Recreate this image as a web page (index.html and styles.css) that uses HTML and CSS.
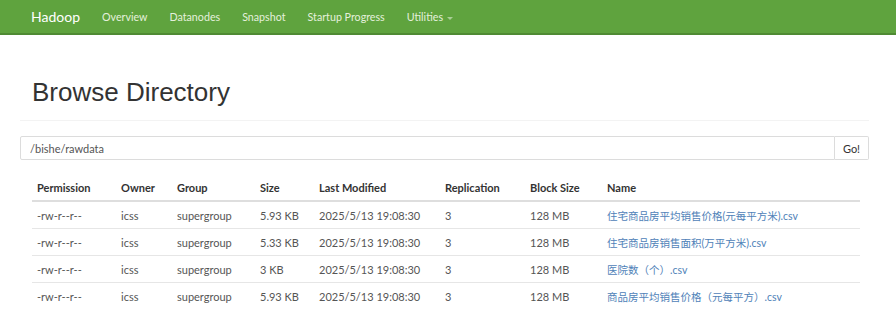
FILE: index.html
```html
<!DOCTYPE html>
<html lang="en">
<head>
    <meta charset="UTF-8">
    <title>Browsing HDFS</title>
    <link rel="stylesheet" href="styles.css">
</head>
<body>
    <nav class="navbar">
        <span class="brand">Hadoop</span>
        <a href="#">Overview</a>
        <a href="#">Datanodes</a>
        <a href="#">Snapshot</a>
        <a href="#">Startup Progress</a>
        <a href="#" class="dropdown">Utilities <span class="caret"></span></a>
    </nav>

    <div class="container">
        <div class="page-header">
            <h1>Browse Directory</h1>
        </div>

        <div class="input-group">
            <input type="text" class="path" value="/bishe/rawdata">
            <button class="go">Go!</button>
        </div>

        <table class="listing">
            <thead>
                <tr>
                    <th class="c-perm">Permission</th>
                    <th class="c-owner">Owner</th>
                    <th class="c-group">Group</th>
                    <th class="c-size">Size</th>
                    <th class="c-mod">Last Modified</th>
                    <th class="c-rep">Replication</th>
                    <th class="c-block">Block Size</th>
                    <th class="c-name">Name</th>
                </tr>
            </thead>
            <tbody>
                <tr>
                    <td>-rw-r--r--</td><td>icss</td><td>supergroup</td><td>5.93 KB</td>
                    <td>2025/5/13 19:08:30</td><td>3</td><td>128 MB</td>
                    <td><a href="#">住宅商品房平均销售价格(元每平方米).csv</a></td>
                </tr>
                <tr>
                    <td>-rw-r--r--</td><td>icss</td><td>supergroup</td><td>5.33 KB</td>
                    <td>2025/5/13 19:08:30</td><td>3</td><td>128 MB</td>
                    <td><a href="#">住宅商品房销售面积(万平方米).csv</a></td>
                </tr>
                <tr>
                    <td>-rw-r--r--</td><td>icss</td><td>supergroup</td><td>3 KB</td>
                    <td>2025/5/13 19:08:30</td><td>3</td><td>128 MB</td>
                    <td><a href="#">医院数（个）.csv</a></td>
                </tr>
                <tr>
                    <td>-rw-r--r--</td><td>icss</td><td>supergroup</td><td>5.93 KB</td>
                    <td>2025/5/13 19:08:30</td><td>3</td><td>128 MB</td>
                    <td><a href="#">商品房平均销售价格（元每平方）.csv</a></td>
                </tr>
            </tbody>
        </table>
    </div>
</body>
</html>
```

FILE: styles.css
```css
body {
    margin: 0;
    font-family: Lato, "Noto Sans CJK SC", sans-serif;
    color: #333;
    background: #fff;
}
.navbar {
    display: flex;
    align-items: center;
    height: 33px;
    padding-left: 31px;
    background: #5fa33e;
    border-bottom: 2px solid #4f8a33;
}
.navbar a {
    color: #e4f0dc;
    text-decoration: none;
    font-size: 10.7px;
    margin-left: 22px;
}
.brand {
    color: #fff;
    font-size: 14px;
}
.caret {
    display: inline-block;
    width: 0;
    height: 0;
    margin-left: 1px;
    vertical-align: middle;
    border-top: 3px solid #a9cf96;
    border-left: 3px solid transparent;
    border-right: 3px solid transparent;
}
.container {
    padding: 0 27px 0 20px;
}
.page-header {
    margin: 0 0 15px 0;
    padding: 40px 0 11px 12px;
    border-bottom: 1px solid #f3f3f3;
}
.page-header h1 {
    margin: 0;
    font-family: "Liberation Sans", Arial, sans-serif;
    font-weight: normal;
    font-size: 26px;
    line-height: 34px;
    color: #333;
}
.input-group {
    display: flex;
    height: 24px;
}
.path {
    flex: 1;
    box-sizing: border-box;
    height: 24px;
    margin: 0;
    padding: 0 9px;
    border: 1px solid #dcdcdc;
    border-radius: 2px 0 0 2px;
    font-family: Lato, sans-serif;
    font-size: 11px;
    color: #555;
}
.go {
    box-sizing: border-box;
    width: 34px;
    height: 24px;
    margin: 0;
    padding: 0;
    border: 1px solid #dcdcdc;
    border-left: none;
    border-radius: 0 2px 2px 0;
    background: #fff;
    font-family: Lato, sans-serif;
    font-size: 11px;
    color: #333;
}
.listing {
    margin: 14px 0 0 12px;
    border-collapse: collapse;
    font-size: 11px;
}
.listing th {
    text-align: left;
    font-weight: bold;
    color: #333;
    height: 26px;
    padding: 0 5px;
    border-bottom: 2px solid #dedede;
}
.listing td {
    height: 26px;
    padding: 0 5px;
    color: #555;
    border-bottom: 1px solid #e6e6e6;
}
.listing td a {
    color: #4f82b8;
    text-decoration: none;
    font-size: 10.5px;
}
.c-perm { width: 74px; }
.c-owner { width: 46px; }
.c-group { width: 73px; }
.c-size { width: 49px; }
.c-mod { width: 116px; }
.c-rep { width: 75px; }
.c-block { width: 67px; }
.c-name { width: 248px; }
```
